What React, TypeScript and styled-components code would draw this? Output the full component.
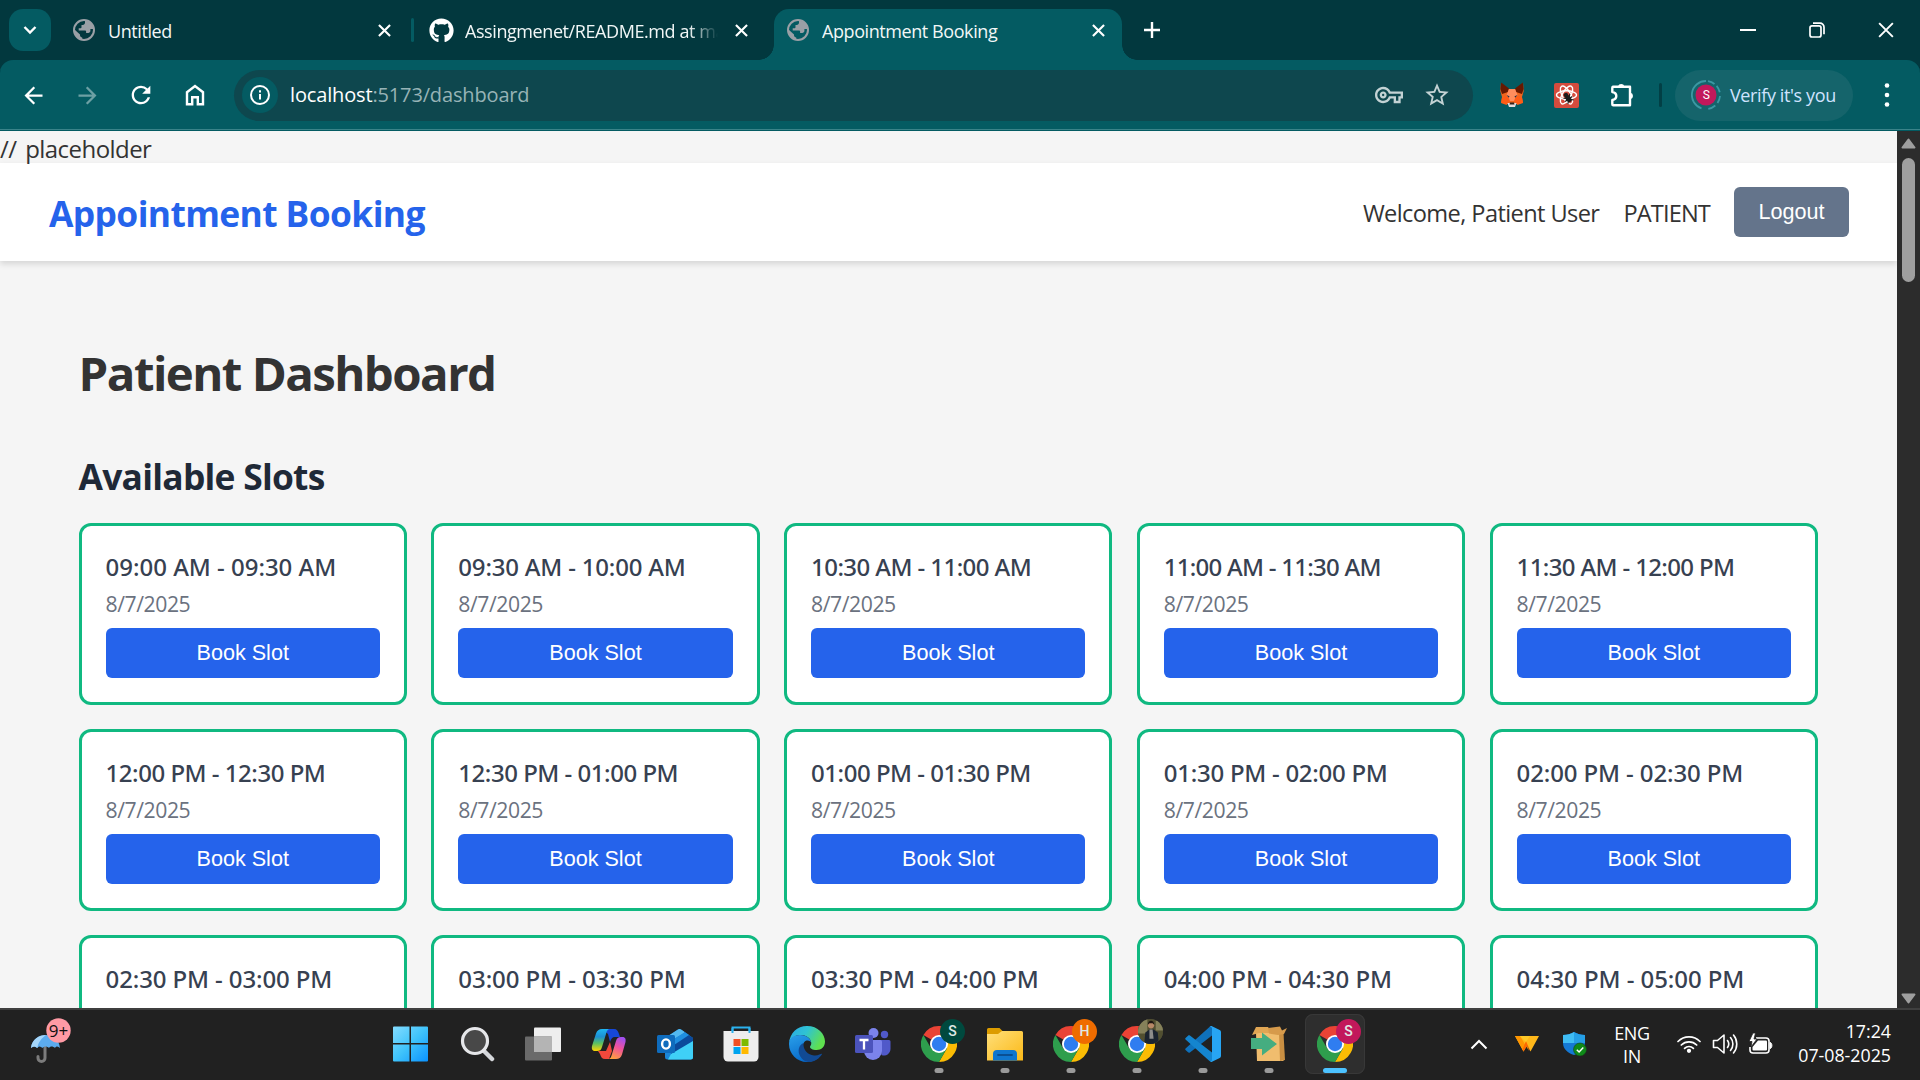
import React from "react";
import styled, { createGlobalStyle, css } from "styled-components";
import { FaGithub } from "react-icons/fa";
import { MdArrowBack, MdArrowForward, MdRefresh, MdOutlineVpnKey, MdStarBorder } from "react-icons/md";

const ui = `"Segoe UI", "Open Sans", "Noto Sans", sans-serif`;
const semi = `"Segoe UI Semibold", "Noto Sans", "Open Sans", sans-serif`;
const arial = `Arial, "Liberation Sans", sans-serif`;

const GlobalStyle = createGlobalStyle`
  * { box-sizing: border-box; }
  body { margin: 0; background: #f5f5f5; overflow: hidden; }
  svg { display: block; flex: none; }
`;

const Screen = styled.div`
  width: 1920px;
  height: 1080px;
  display: flex;
  flex-direction: column;
  overflow: hidden;
  font-family: ${ui};
`;

/* ---------- browser chrome ---------- */

const TabStrip = styled.div`
  height: 60px;
  flex: none;
  display: flex;
  align-items: flex-end;
  padding-left: 9px;
  background: #02383e;
`;

const TabSearch = styled.div`
  width: 42px;
  height: 42px;
  margin: 0 9px 9px 0;
  border-radius: 14px;
  background: #045b62;
  display: grid;
  place-items: center;
`;

const Tabs = styled.div`
  display: flex;
  gap: 9px;
`;

const Tab = styled.div<{ $active?: boolean; $divider?: boolean }>`
  position: relative;
  width: 348px;
  height: 51px;
  padding: 0 0 9px 12px;
  display: flex;
  align-items: center;
  color: #f2f7f7;
  ${(p) =>
    p.$active &&
    css`
      background: #045b62;
      border-radius: 15px 15px 0 0;
      &::before,
      &::after {
        content: "";
        position: absolute;
        bottom: 0;
        width: 15px;
        height: 15px;
      }
      &::before {
        left: -15px;
        background: radial-gradient(circle at 0 0, transparent 14.5px, #045b62 15px);
      }
      &::after {
        right: -15px;
        background: radial-gradient(circle at 100% 0, transparent 14.5px, #045b62 15px);
      }
    `}
  ${(p) =>
    p.$divider &&
    css`
      &::after {
        content: "";
        position: absolute;
        right: -6px;
        top: 9px;
        width: 3px;
        height: 24px;
        border-radius: 2px;
        background: #045b62;
      }
    `}
`;

const TabIcon = styled.div`
  width: 36px;
  display: flex;
`;

const TabTitle = styled.div<{ $fade?: boolean }>`
  width: 253px;
  overflow: hidden;
  white-space: nowrap;
  font-size: 18px;
  line-height: 28px;
  padding-top: 2px;
  letter-spacing: -0.42px;
  ${(p) => p.$fade && css`mask-image: linear-gradient(90deg, #000 224px, transparent 253px);`}
`;

const CloseSlot = styled.div`
  flex: 1;
  display: flex;
  justify-content: center;
`;

const NewTab = styled.div`
  width: 42px;
  height: 42px;
  margin: 0 0 9px 9px;
  display: grid;
  place-items: center;
`;

const WindowControls = styled.div`
  margin-left: auto;
  height: 60px;
  display: flex;
  align-items: center;
`;

const WindowButton = styled.div`
  width: 69px;
  display: flex;
  justify-content: center;
`;

const ToolbarBack = styled.div`
  flex: none;
  height: 71px;
  background: linear-gradient(#02383e 20px, #045b62 20px);
`;

const Toolbar = styled.div`
  height: 71px;
  display: flex;
  align-items: center;
  padding: 0 16px 1px 6px;
  background: #045b62;
  border-radius: 13px 13px 0 0;
  box-shadow: inset 0 -1px #045b62, inset 0 -2px #3a8389;
  color: #fff;
`;

const ToolSlot = styled.div<{ $dim?: boolean; $nudge?: number }>`
  width: 54px;
  display: flex;
  justify-content: center;
  padding-left: ${(p) => p.$nudge ?? 0}px;
  opacity: ${(p) => (p.$dim ? 0.42 : 1)};
`;

const AddressBar = styled.div`
  width: 1239px;
  height: 51px;
  margin: 0 12px;
  padding: 0 22px 0 8px;
  display: flex;
  align-items: center;
  border-radius: 26px;
  background: #0e474e;
  color: #c3d2d4;
`;

const SiteInfo = styled.div`
  width: 36px;
  height: 36px;
  border-radius: 50%;
  background: #045b62;
  display: grid;
  place-items: center;
`;

const Url = styled.div`
  flex: 1;
  margin-left: 12px;
  font-size: 20px;
  letter-spacing: -0.15px;
  line-height: 30px;
  color: #97b3b6;
  b {
    font-weight: 400;
    color: #fff;
  }
`;

const AddressActions = styled.div`
  display: flex;
  align-items: center;
  gap: 20px;
`;

const ToolDivider = styled.div`
  width: 3px;
  height: 24px;
  margin: 0 13px 0 12px;
  border-radius: 2px;
  background: #023f45;
`;

const ProfilePill = styled.div`
  width: 178px;
  height: 51px;
  padding-left: 16px;
  display: flex;
  align-items: center;
  gap: 9px;
  border-radius: 26px;
  background: #15646b;
  color: #cfe3ff;
  font-size: 18px;
  letter-spacing: -0.38px;
  white-space: nowrap;
`;

const MenuSlot = styled.div`
  margin-left: auto;
  width: 34px;
  display: flex;
  justify-content: center;
`;

/* ---------- page ---------- */

const Viewport = styled.div`
  flex: 1;
  min-height: 0;
  display: flex;
`;

const Page = styled.div`
  flex: 1;
  min-width: 0;
  overflow: hidden;
  background: #f5f5f5;
  color: #333;
`;

const Note = styled.div`
  height: 32px;
  font-size: 24px;
  line-height: 35px;
  letter-spacing: -0.55px;
  word-spacing: 3px;
`;

const Header = styled.header`
  height: 98px;
  padding: 0 48px 0 49px;
  display: flex;
  align-items: center;
  justify-content: space-between;
  background: #fff;
  box-shadow: 0 3px 6px rgba(0, 0, 0, 0.13);
`;

const Brand = styled.div`
  font-size: 35.4px;
  font-weight: 700;
  letter-spacing: -0.62px;
  color: #2563eb;
  padding-top: 2px;
`;

const UserNav = styled.div`
  display: flex;
  align-items: center;
  gap: 24px;
  font-size: 23.6px;
`;

const NavText = styled.span<{ $spacing: number }>`
  letter-spacing: ${(p) => p.$spacing}px;
  padding-top: 2px;
`;

const Button = styled.button<{ $variant: "primary" | "muted" }>`
  height: 50px;
  width: ${(p) => (p.$variant === "primary" ? "100%" : "115px")};
  padding: 0;
  border: 0;
  border-radius: 6px;
  background: ${(p) => (p.$variant === "primary" ? "#2563eb" : "#64748b")};
  color: #fff;
  font-family: ${arial};
  font-size: 21.6px;
  line-height: 24px;
`;

const Main = styled.main`
  padding: 82px 79.15px 0 78.6px;
`;

const PageTitle = styled.h1`
  margin: 0 0 50px;
  font-size: 47.4px;
  line-height: 60px;
  letter-spacing: -1.55px;
  color: #333;
`;

const SectionTitle = styled.h2`
  margin: 0 0 24px;
  font-size: 35.4px;
  line-height: 46px;
  letter-spacing: -0.76px;
  color: #1f2937;
`;

const SlotGrid = styled.div`
  display: grid;
  grid-template-columns: repeat(5, 1fr);
  gap: 24px 24.5px;
`;

const SlotCard = styled.div`
  height: 182px;
  padding: 24px;
  border: 3px solid #10b981;
  border-radius: 12px;
  background: #fff;
`;

const SlotTime = styled.div<{ $spacing: number }>`
  font-family: ${semi};
  font-weight: 500;
  font-size: 24px;
  line-height: 34px;
  letter-spacing: ${(p) => p.$spacing}px;
  white-space: nowrap;
  color: #374151;
`;

const SlotDate = styled.div`
  margin: 4px 0 8px;
  font-size: 21.2px;
  line-height: 32px;
  letter-spacing: -0.45px;
  color: #6b7280;
`;

const Scrollbar = styled.div`
  width: 23px;
  background: #2c2c2c;
  display: flex;
  flex-direction: column;
  align-items: center;
  padding: 7px 0 4px;
`;

const Thumb = styled.div`
  width: 13px;
  height: 124px;
  margin: 9px 0 auto;
  border-radius: 7px;
  background: #9f9f9f;
`;

/* ---------- taskbar ---------- */

const Taskbar = styled.div`
  flex: none;
  height: 72px;
  padding-bottom: 2px;
  display: flex;
  align-items: center;
  background: #212121;
  border-top: 2px solid #3f3f3f;
  color: #fff;
`;

const Weather = styled.div`
  width: 381px;
  padding: 0 0 6px 28px;
`;

const AppRow = styled.div`
  display: flex;
  gap: 6px;
  width: 1058px;
`;

const AppTile = styled.div<{ $active?: boolean }>`
  position: relative;
  width: 60px;
  height: 60px;
  border-radius: 8px;
  display: grid;
  place-items: center;
  ${(p) => p.$active && css`background: #2e2e2e; box-shadow: inset 0 0 0 1px #383838;`}
`;

const RunMark = styled.span<{ $active?: boolean }>`
  position: absolute;
  bottom: 1px;
  left: 50%;
  width: ${(p) => (p.$active ? 24 : 9)}px;
  height: 5px;
  border-radius: 3px;
  transform: translateX(-50%);
  background: ${(p) => (p.$active ? "#4cc2ff" : "#9a9a9a")};
`;

const Badge = styled.span<{ $color: string }>`
  position: absolute;
  top: 5px;
  right: 4px;
  width: 25px;
  height: 25px;
  border-radius: 50%;
  overflow: hidden;
  background: ${(p) => p.$color};
  color: #dfe9e6;
  font: 500 14px/25px Roboto, sans-serif;
  text-align: center;
`;

const Tray = styled.div`
  flex: 1;
  height: 100%;
  display: flex;
  align-items: center;
  padding: 0 29px 0 16px;
`;

const TrayIcon = styled.div<{ $w: number }>`
  width: ${(p) => p.$w}px;
  display: flex;
  justify-content: center;
`;

const Language = styled.div`
  width: 66px;
  padding-top: 1px;
  text-align: center;
  font-size: 18px;
  line-height: 23px;
  letter-spacing: -0.4px;
`;

const Clock = styled.div`
  margin-left: auto;
  text-align: right;
  font-size: 17.8px;
  line-height: 24px;
  padding-bottom: 2px;
`;

/* ---------- drawings ---------- */

const Globe = () => (
  <svg width="24" height="24" viewBox="0 0 24 24" fill="#9aa0a6">
    <path d="M12 1a11 11 0 1 0 0 22 11 11 0 0 0 0-22zm0 2a9 9 0 1 1 0 18 9 9 0 0 1 0-18z" />
    <path d="M13 2.500v2.300c0 1.200-1 2.200-2.200 2.200H9.500v2.200c0 .6-.5 1.100-1.100 1.100H6.700V12.500H13c.6 0 1.100.5 1.100 1.100V15h2.100c1.200 0 2.200-.9 2.200-2.200V11h3C21.500 6.500 18 3 13 2.500z" />
    <path d="M2.500 11.500 8 16.500v.8c0 1.200 1 2.200 2.200 2.200v2.200C6 21 2.500 17 2.500 11.500z" />
  </svg>
);

const Cross = ({ size = 13, w = 2.3 }: { size?: number; w?: number }) => (
  <svg width={size} height={size} viewBox="0 0 14 14" stroke="#fff" strokeWidth={w}>
    <path d="M1 1l12 12M13 1L1 13" />
  </svg>
);

const Home = () => (
  <svg width="20" height="22" viewBox="0 0 20 22" fill="none" stroke="#fff" strokeWidth="2.400">
    <path d="M2 8.200 10 2l8 6.200V20.300h-5.200V13.300H7.200v7H2z" />
  </svg>
);

const Fox = () => (
  <svg width="24" height="26" viewBox="0 0 24 26">
    <path d="M1 1l7 6h8l7-6 .7 8-1.700 6 1 5.500L18 22H6l-5-1.500L2 15 .3 9z" fill="#f0651d" />
    <path d="M1.200.5 9 6.500 8 10l-6 2L.4 7zM22.800.5 15 6.500 16 10l6 2 1.600-5z" fill="#661800" />
    <path d="M9 7h6l2.500 6L15 19H9l-2.500-6z" fill="#ff8d5d" />
    <path d="M2 15.500 8 14l2 5-3.500 4-5.500-2zM22 15.500 16 14l-2 5 3.500 4 5.500-2z" fill="#ff5c16" />
    <path d="M6.500 13l3 1.300-.7 1.500zM17.500 13l-3 1.300.7 1.500z" fill="#23344a" />
    <path d="M7.500 21h9L15 25H9z" fill="#e6dcdc" />
    <path d="M10 20.500h4l.5 2h-5z" fill="#32211b" />
  </svg>
);

const ReactBug = () => (
  <svg width="25" height="25" viewBox="0 0 25 25" fill="none">
    <rect width="25" height="25" rx="2" fill="#d54b3d" />
    <g stroke="#fff" strokeWidth="1.400">
      <ellipse cx="12.500" cy="12" rx="10" ry="4.200" />
      <ellipse cx="12.500" cy="12" rx="10" ry="4.200" transform="rotate(60 12.500 12)" />
      <ellipse cx="12.500" cy="12" rx="10" ry="4.200" transform="rotate(120 12.500 12)" />
    </g>
    <g transform="rotate(-35 14 15) translate(2.800 3) scale(.8)" fill="#1c1c1c" stroke="#1c1c1c" strokeWidth="1.300">
      <circle cx="14" cy="10.500" r="2.200" />
      <ellipse cx="14" cy="16" rx="2.600" ry="4" />
      <path d="M9 12l3 2.500M19 12l-3 2.500M8.500 16.500H19.500M9.500 21l3-2.500M18.500 21l-3-2.500" />
    </g>
  </svg>
);

const Puzzle = () => (
  <svg width="26" height="26" viewBox="0 0 26 26">
    <path d="M3 4.800h17v18.400H3.300c-.6 0-1-.4-1-1V18c3-.5 4-2.400 4-4s-1-3.500-4-4V5.800c0-.6.4-1 1-1z" fill="none" stroke="#fff" strokeWidth="2.400" strokeLinejoin="round" />
    <path d="M8 4.500a3.300 3.300 0 0 1 6.400 0zM20.500 10.800a3.300 3.300 0 0 1 0 6.400z" fill="#fff" />
  </svg>
);

const Avatar = () => (
  <svg width="30" height="30" viewBox="0 0 30 30">
    <path d="M15 1a14 14 0 0 0-4.500 27.300" fill="none" stroke="#3b98a3" strokeWidth="1.800" />
    <path d="M17 1.150a14 14 0 0 1 6.500 2.900M25.600 5.800a14 14 0 0 1 3.200 6.500M29 16a14 14 0 0 1-2.500 7M24.300 25.500a14 14 0 0 1-7 3.300" fill="none" stroke="#3b98a3" strokeWidth="1.800" />
    <circle cx="15" cy="15" r="10.500" fill="#c2185b" />
    <text x="15" y="19.200" textAnchor="middle" fontFamily="Roboto, sans-serif" fontSize="12" fill="#fff">S</text>
  </svg>
);

const Windows = () => (
  <svg width="36" height="36" viewBox="0 0 36 36">
    <defs>
      <linearGradient id="win" x1="0" y1="0" x2="1" y2="1">
        <stop offset="0" stopColor="#84dcff" />
        <stop offset=".5" stopColor="#3fc3fb" />
        <stop offset="1" stopColor="#0a92ff" />
      </linearGradient>
    </defs>
    <path d="M1 .5h15.500V17H0V1.500a1 1 0 0 1 1-1zM18 .5h16a1 1 0 0 1 1 1V17H18zM0 18.500h16.500v17H1a1 1 0 0 1-1-1zM18 18.500h17v16a1 1 0 0 1-1 1H18z" fill="url(#win)" />
  </svg>
);

const Search = () => (
  <svg width="36" height="36" viewBox="0 0 36 36">
    <path d="M25 25l8 8" stroke="#d5d7db" strokeWidth="4.500" strokeLinecap="round" />
    <circle cx="16" cy="15" r="12.500" fill="#484848" stroke="#e6e7ea" strokeWidth="3.200" />
  </svg>
);

const TaskView = () => (
  <svg width="36" height="36" viewBox="0 0 36 36">
    <rect x="9" y="1.500" width="27" height="24.500" rx="1" fill="#eeeeee" />
    <rect x="0" y="10.500" width="27" height="24" rx="1" fill="#6a6a6a" />
    <path d="M9 10.500h18V26H9z" fill="#b4b4b4" />
  </svg>
);

const Copilot = () => (
  <svg width="36" height="36" viewBox="0 0 36 36">
    <defs>
      <linearGradient id="cpA" x1="0" y1="0" x2="0" y2="1">
        <stop offset="0" stopColor="#1fb6f2" /><stop offset=".35" stopColor="#1c8fd4" />
        <stop offset=".65" stopColor="#5bbf62" /><stop offset="1" stopColor="#ffd400" />
      </linearGradient>
      <linearGradient id="cpB" x1=".7" y1="0" x2=".3" y2="1">
        <stop offset="0" stopColor="#a04ff0" /><stop offset=".45" stopColor="#f0529a" />
        <stop offset="1" stopColor="#ffa13c" />
      </linearGradient>
    </defs>
    <path d="M11 3h12c3 0 4 2 5 5l1 3h-5c-3 0-4 2-5 5l-2-8z" fill="#1648d8" />
    <path d="M7 25h8l4-9 2 9-3 8h-4c-3 0-4-2-5-5z" fill="#f0483c" />
    <path d="M11 3h8.500c-3 0-3.700 2-4.500 5l-4 13c-1 3-2 4-5 4H4c-3 0-3.500-2.500-3-5L5 7.500C6 4.500 8 3 11 3z" fill="url(#cpA)" />
    <path d="M25 33h-8.500c3 0 3.700-2 4.500-5l4-13c1-3 2-4 5-4h1.500c3 0 3.500 2.500 3 5L31 28.500C30 31.500 28 33 25 33z" fill="url(#cpB)" />
  </svg>
);

const Outlook = () => (
  <svg width="36" height="36" viewBox="0 0 36 36">
    <path d="M8 12 21 3.500a3 3 0 0 1 3 0L36 12v19a2.500 2.500 0 0 1-2.500 2.500h-23A2.500 2.500 0 0 1 8 31z" fill="#1a86d9" />
    <path d="M8 12 21 3.500a3 3 0 0 1 3 0l4 2.700L12 16z" fill="#53b9f0" />
    <path d="M28 6.200 36 12v5L15 29l-3-6z" fill="#0b4a9b" />
    <path d="M28 6.200 32 9 14 21v-6z" fill="#1f8fe0" />
    <path d="M36 15v16a2.500 2.500 0 0 1-2.500 2.500H11L14 28z" fill="#3fd0f7" />
    <rect x="0" y="9" width="18" height="18" rx="1.500" fill="#0f6cbd" />
    <ellipse cx="9" cy="18" rx="3.900" ry="4.600" fill="none" stroke="#fff" strokeWidth="2.400" />
  </svg>
);

const Store = () => (
  <svg width="36" height="36" viewBox="0 0 36 36">
    <path d="M9.500 7V1.500h17V7" fill="none" stroke="#2bb1ee" strokeWidth="2" />
    <path d="M.5 5h35v26a4.500 4.500 0 0 1-4.500 4.500H5A4.500 4.500 0 0 1 .5 31z" fill="#ededed" />
    <path d="M9.500 2v5M26.500 2v5" stroke="#2bb1ee" strokeWidth="2" />
    <path d="M10.500 13h7v7h-7z" fill="#f25022" /><path d="M18.500 13h7v7h-7z" fill="#7fba00" />
    <path d="M10.500 21h7v7h-7z" fill="#00a4ef" /><path d="M18.500 21h7v7h-7z" fill="#ffb900" />
  </svg>
);

const Edge = () => (
  <svg width="36" height="36" viewBox="0 0 36 36">
    <defs>
      <linearGradient id="edG" x1="0" y1="0" x2="1" y2=".4">
        <stop offset="0" stopColor="#2aa7e8" /><stop offset=".5" stopColor="#2fc3d3" /><stop offset="1" stopColor="#5fe04f" />
      </linearGradient>
      <linearGradient id="edB" x1="0" y1="0" x2=".5" y2="1">
        <stop offset="0" stopColor="#2aa0ea" /><stop offset="1" stopColor="#0667c8" />
      </linearGradient>
    </defs>
    <path d="M0 17C1 7 8 0 18 0c11 0 18 8 18 15.500 0 5-3.500 8.500-8.500 8.500-4 0-6.500-1.500-6.500-3 0-1 1.300-1.500 1.300-4C22 12 17 9 11.500 9 6 9 1.500 12.500 0 17z" fill="url(#edG)" />
    <path d="M11 9c7 0 11 4 11.300 8-.3-2-4.300-4-7-1-4 5-1 13 6 15 5 1.300 9-.5 11.500-3C29.500 33 24 36 18 36 8 36 0 28 0 18 0 12 5 9 11 9z" fill="url(#edB)" />
    <path d="M14.500 17c-5 2-6 8-3.500 13 2 4 6 6 9 5.900 6-.2 10.500-3.500 13-8-.5-.7-3.500 2-8 1.500-6-.5-11-5-10.500-12.400z" fill="#114a94" />
  </svg>
);

const Teams = () => (
  <svg width="36" height="36" viewBox="0 0 36 36">
    <circle cx="29.500" cy="8.500" r="3.700" fill="#5059c9" />
    <path d="M25 14h9a1.500 1.500 0 0 1 1.500 1.500V23a6.500 6.500 0 0 1-9 6z" fill="#5059c9" />
    <circle cx="18.500" cy="7" r="5" fill="#7b83eb" />
    <path d="M10 14h15.500a1.500 1.500 0 0 1 1.500 1.500V25a9 9 0 0 1-18 0V15z" fill="#7b83eb" />
    <rect x="0" y="9" width="18" height="18" rx="1.500" fill="#4b53bc" />
    <path d="M4.500 14h9M9 14v9.500" stroke="#fff" strokeWidth="2.300" />
  </svg>
);

const Chrome = () => (
  <svg width="36" height="36" viewBox="0 0 36 36">
    <path d="M18 18 2.410 9A18 18 0 0 1 33.590 9z" fill="#ea4335" />
    <path d="M18 9h15.590A18 18 0 0 1 18 36l7.800-13.500z" fill="#fbbc04" />
    <path d="M10.200 22.500 2.410 9A18 18 0 0 0 18 36l7.800-13.500z" fill="#2e9e4d" />
    <circle cx="18" cy="18" r="9" fill="#fff" />
    <circle cx="18" cy="18" r="7.200" fill="#2f7df0" />
  </svg>
);

const Folder = () => (
  <svg width="36" height="36" viewBox="0 0 36 36">
    <defs>
      <linearGradient id="fold" x1="0" y1="0" x2="1" y2="1">
        <stop offset="0" stopColor="#ffdf7a" /><stop offset="1" stopColor="#fbb917" />
      </linearGradient>
    </defs>
    <path d="M0 3.500A1.500 1.500 0 0 1 1.500 2h11L16 5.500V10H0z" fill="#dc9c00" />
    <path d="M0 8h11l4-3h19.500A1.500 1.500 0 0 1 36 6.500V34.500H0z" fill="url(#fold)" />
    <path d="M6 34.500V28a4 4 0 0 1 4-4h16a4 4 0 0 1 4 4v6.500z" fill="#0f76cf" />
    <path d="M11 29h14" stroke="#0a4f93" strokeWidth="1.800" strokeLinecap="round" />
  </svg>
);

const VsCode = () => (
  <svg width="36" height="36" viewBox="0 0 36 36">
    <path d="M.8 22.300a1.300 1.300 0 0 0 0 2l2.200 2c.6.500 1.300.5 1.900.1L27 9.500V.8c-1-.5-2-.3-2.800.5z" fill="#0f71bb" />
    <path d="M.8 13.700a1.300 1.300 0 0 1 0-2l2.200-2c.6-.5 1.300-.5 1.900-.1L27 26.500v8.700c-1 .5-2 .3-2.800-.5z" fill="#1485cf" />
    <path d="M27 .3 34.700 4A2.500 2.500 0 0 1 36 6.300v23.400a2.500 2.500 0 0 1-1.300 2.300L27 35.700c-1 .4-2 .1-2.700-.6 1.200.7 2.700 0 2.700-1.600v-31C27 .9 25.500.2 24.300.9 25 .2 26-.1 27 .3z" fill="#27a5f3" />
  </svg>
);

const PackageBox = () => (
  <svg width="36" height="36" viewBox="0 0 36 36">
    <path d="M5 7h26l1.500 28H6z" fill="#f0bd6e" />
    <path d="M28 7h4.500l1.500 27-5 1z" fill="#c98f42" />
    <path d="M5 1h12l4 6H8L1 9z" fill="#e0a654" />
    <path d="M17 2l12-1.500 2 4L36 2l-3 6-6 1-9-1.500z" fill="#d69a4b" />
    <path d="M0 12h11V6.500L26 18 11 29.500V23H0z" fill="#45ad80" />
  </svg>
);

const Portrait = () => (
  <svg width="25" height="25" viewBox="0 0 24 24">
    <rect width="24" height="24" fill="#514f30" />
    <path d="M0 0h9v14H0zM17 2h7v9h-7z" fill="#85815a" />
    <path d="M6 24l1-11 4-3h4l4 3 1 11z" fill="#1b2430" />
    <path d="M11 10h3l1 9h-4z" fill="#8d8d8b" />
    <circle cx="12.500" cy="6" r="3" fill="#b78967" />
    <path d="M9.500 5.500c0-5 6-5 6 0l-1.500-1.500h-3z" fill="#1d1611" />
  </svg>
);

const Umbrella = () => (
  <svg width="44" height="46" viewBox="0 0 44 46">
    <path d="M17 24v16a3.500 3.500 0 0 1-7 0v-1.500" fill="none" stroke="#7c7c7c" strokeWidth="3" strokeLinecap="round" />
    <path d="M3 30C4 21 11 17 18 17s13 4 14 13c-2-2-4-2-5 0-2-2-5-2-6 0-2-2-5-2-6.500 0-2-2-4-2-5.500 0-2-2-4-2-6 0z" fill="#5cabee" />
    <path d="M3 30C4 21 11 17 18 17c-4 3-8 7-8.500 13-2-2-4.500-2-6.500 0z" fill="#a5d6fa" />
    <circle cx="30.500" cy="12.500" r="12.200" fill="#ff9aa5" />
    <text x="30.500" y="18.500" textAnchor="middle" fontFamily="Open Sans, Noto Sans, sans-serif" fontSize="17" fill="#111">9+</text>
  </svg>
);

const Wallet = () => (
  <svg width="24" height="18" viewBox="0 0 24 18">
    <path d="M0 1h24L15.500 16.500 12 10l-3.500 6.500z" fill="#ffb81a" />
    <path d="M0 1h5l9 15-2-6-3.500 6.500z" fill="#ff9500" />
    <path d="M7.500 14.500 11 6l4.500 10.500L12 11l-3.500 5.500z" fill="#ff6a00" />
    <path d="M5 1h10l-4 6z" fill="#ffc928" />
  </svg>
);

const Shield = () => (
  <svg width="24" height="24" viewBox="0 0 24 24">
    <path d="M11 0c3 2 7 3 11 3v8c0 6-5 10-11 12C5 21 0 17 0 11V3c4 0 8-1 11-3z" fill="#1579d4" />
    <path d="M11 0v11H0V3c4 0 8-1 11-3z" fill="#3fbcf3" />
    <path d="M11 0c3 2 7 3 11 3v8H11z" fill="#259fe6" />
    <circle cx="17" cy="17.500" r="6.500" fill="#0f8a18" stroke="#17431b" strokeWidth=".6" />
    <path d="M13.800 17.700l2.300 2.300 4.200-4.400" fill="none" stroke="#fff" strokeWidth="1.500" />
  </svg>
);

const Wifi = () => (
  <svg width="24" height="18" viewBox="0 0 24 18" fill="none" stroke="#fff" strokeWidth="1.700" strokeLinecap="round">
    <path d="M1 6.500a15.500 15.500 0 0 1 22 0M4.300 10a11 11 0 0 1 15.400 0M7.600 13.300a6.300 6.300 0 0 1 8.800 0" />
    <circle cx="12" cy="15.800" r="1.300" fill="#fff" />
  </svg>
);

const Speaker = () => (
  <svg width="26" height="22" viewBox="0 0 26 22" fill="none" stroke="#fff" strokeWidth="1.600" strokeLinecap="round" strokeLinejoin="round">
    <path d="M1.500 7.500h4L12 2v18l-6.500-5.500h-4z" />
    <path d="M15.500 7.500a6 6 0 0 1 0 7M18.500 4.500a10 10 0 0 1 0 13M21.500 2a14 14 0 0 1 0 18" />
  </svg>
);

const Battery = () => (
  <svg width="26" height="22" viewBox="0 0 26 22">
    <path d="M8 5h10a3 3 0 0 1 3 3v9a3 3 0 0 1-3 3H5a3 3 0 0 1-3-3v-3" fill="none" stroke="#fff" strokeWidth="1.600" />
    <path d="M10 7.500h8a1 1 0 0 1 1 1v8a1 1 0 0 1-1 1H5.500a1 1 0 0 1-1-1V14z" fill="#fff" />
    <path d="M22 9.500c2.500 0 2.500 6 0 6z" fill="#fff" stroke="#fff" />
    <path d="M5 0 1 8.500h3L3 14l6-8H6L7.500 0z" fill="#fff" stroke="#212121" strokeWidth=".8" />
  </svg>
);

/* ---------- data ---------- */

const slots: { time: string; spacing: number }[] = [
  { time: "09:00 AM - 09:30 AM", spacing: -0.02 },
  { time: "09:30 AM - 10:00 AM", spacing: -0.2 },
  { time: "10:30 AM - 11:00 AM", spacing: -0.58 },
  { time: "11:00 AM - 11:30 AM", spacing: -0.74 },
  { time: "11:30 AM - 12:00 PM", spacing: -0.64 },
  { time: "12:00 PM - 12:30 PM", spacing: -0.48 },
  { time: "12:30 PM - 01:00 PM", spacing: -0.48 },
  { time: "01:00 PM - 01:30 PM", spacing: -0.48 },
  { time: "01:30 PM - 02:00 PM", spacing: -0.27 },
  { time: "02:00 PM - 02:30 PM", spacing: -0.12 },
  { time: "02:30 PM - 03:00 PM", spacing: -0.12 },
  { time: "03:00 PM - 03:30 PM", spacing: -0.08 },
  { time: "03:30 PM - 04:00 PM", spacing: -0.06 },
  { time: "04:00 PM - 04:30 PM", spacing: -0.04 },
  { time: "04:30 PM - 05:00 PM", spacing: -0.06 },
];

type TaskbarApp = { icon: React.ReactNode; running?: boolean; active?: boolean; badge?: React.ReactNode; badgeColor?: string };

const apps: TaskbarApp[] = [
  { icon: <Windows /> },
  { icon: <Search /> },
  { icon: <TaskView /> },
  { icon: <Copilot /> },
  { icon: <Outlook /> },
  { icon: <Store /> },
  { icon: <Edge /> },
  { icon: <Teams /> },
  { icon: <Chrome />, running: true, badge: "S", badgeColor: "#00493e" },
  { icon: <Folder />, running: true },
  { icon: <Chrome />, running: true, badge: "H", badgeColor: "#ef6c00" },
  { icon: <Chrome />, running: true, badge: <Portrait />, badgeColor: "#444" },
  { icon: <VsCode />, running: true },
  { icon: <PackageBox />, running: true },
  { icon: <Chrome />, running: true, active: true, badge: "S", badgeColor: "#c2185b" },
];

export default function App() {
  return (
    <Screen>
      <GlobalStyle />
      <TabStrip>
        <TabSearch>
          <svg width="14" height="10" viewBox="0 0 14 10" fill="none" stroke="#fff" strokeWidth="2.400">
            <path d="M1.500 2 7 7.500 12.500 2" />
          </svg>
        </TabSearch>
        <Tabs>
          <Tab $divider>
            <TabIcon><Globe /></TabIcon>
            <TabTitle>Untitled</TabTitle>
            <CloseSlot><Cross /></CloseSlot>
          </Tab>
          <Tab>
            <TabIcon><FaGithub size={25} color="#fff" /></TabIcon>
            <TabTitle $fade>Assingmenet/README.md at main</TabTitle>
            <CloseSlot><Cross /></CloseSlot>
          </Tab>
          <Tab $active>
            <TabIcon><Globe /></TabIcon>
            <TabTitle>Appointment Booking</TabTitle>
            <CloseSlot><Cross /></CloseSlot>
          </Tab>
        </Tabs>
        <NewTab>
          <svg width="16" height="16" viewBox="0 0 16 16" stroke="#fff" strokeWidth="2.400"><path d="M8 0v16M0 8h16" /></svg>
        </NewTab>
        <WindowControls>
          <WindowButton>
            <svg width="16" height="2" viewBox="0 0 16 2"><path d="M0 0h16v2H0z" fill="#fff" /></svg>
          </WindowButton>
          <WindowButton>
            <svg width="16" height="16" viewBox="0 0 16 16" fill="none" stroke="#fff" strokeWidth="1.700">
              <rect x="1" y="3.800" width="11" height="11.200" rx="2" />
              <path d="M4 1.200h7a4 4 0 0 1 4 4v7" />
            </svg>
          </WindowButton>
          <WindowButton><Cross size={16} w={1.7} /></WindowButton>
        </WindowControls>
      </TabStrip>
      <ToolbarBack>
        <Toolbar>
          <ToolSlot><MdArrowBack size={27} /></ToolSlot>
          <ToolSlot $dim><MdArrowForward size={27} /></ToolSlot>
          <ToolSlot><MdRefresh size={28} /></ToolSlot>
          <ToolSlot><Home /></ToolSlot>
          <AddressBar>
            <SiteInfo>
              <svg width="20" height="20" viewBox="0 0 20 20" fill="none" stroke="#fff" strokeWidth="2">
                <circle cx="10" cy="10" r="9" />
                <path d="M10 9v5.500M10 5.200v2.200" />
              </svg>
            </SiteInfo>
            <Url><b>localhost</b>:5173/dashboard</Url>
            <AddressActions>
              <MdOutlineVpnKey size={28} />
              <MdStarBorder size={28} />
            </AddressActions>
          </AddressBar>
          <ToolSlot><Fox /></ToolSlot>
          <ToolSlot><ReactBug /></ToolSlot>
          <ToolSlot $nudge={5}><Puzzle /></ToolSlot>
          <ToolDivider />
          <ProfilePill><Avatar />Verify it's you</ProfilePill>
          <MenuSlot>
            <svg width="6" height="24" viewBox="0 0 6 24" fill="#fff">
              <circle cx="3" cy="2.500" r="2.300" /><circle cx="3" cy="12" r="2.300" /><circle cx="3" cy="21.500" r="2.300" />
            </svg>
          </MenuSlot>
        </Toolbar>
      </ToolbarBack>

      <Viewport>
        <Page>
          <Note>// placeholder</Note>
          <Header>
            <Brand>Appointment Booking</Brand>
            <UserNav>
              <NavText $spacing={-0.6}>Welcome, Patient User</NavText>
              <NavText $spacing={-0.85}>PATIENT</NavText>
              <Button $variant="muted">Logout</Button>
            </UserNav>
          </Header>
          <Main>
            <PageTitle>Patient Dashboard</PageTitle>
            <SectionTitle>Available Slots</SectionTitle>
            <SlotGrid>
              {slots.map((s) => (
                <SlotCard key={s.time}>
                  <SlotTime $spacing={s.spacing}>{s.time}</SlotTime>
                  <SlotDate>8/7/2025</SlotDate>
                  <Button $variant="primary">Book Slot</Button>
                </SlotCard>
              ))}
            </SlotGrid>
          </Main>
        </Page>
        <Scrollbar>
          <svg width="15" height="11" viewBox="0 0 15 11"><path d="M7.500 1.500 13.500 9.500h-12z" fill="#9f9f9f" stroke="#9f9f9f" strokeWidth="2" strokeLinejoin="round" /></svg>
          <Thumb />
          <svg width="15" height="11" viewBox="0 0 15 11"><path d="M7.500 9.500 13.500 1.500h-12z" fill="#9f9f9f" stroke="#9f9f9f" strokeWidth="2" strokeLinejoin="round" /></svg>
        </Scrollbar>
      </Viewport>

      <Taskbar>
        <Weather><Umbrella /></Weather>
        <AppRow>
          {apps.map((a, i) => (
            <AppTile key={i} $active={a.active}>
              {a.icon}
              {a.badge && <Badge $color={a.badgeColor!}>{a.badge}</Badge>}
              {a.running && <RunMark $active={a.active} />}
            </AppTile>
          ))}
        </AppRow>
        <Tray>
          <TrayIcon $w={48}>
            <svg width="18" height="11" viewBox="0 0 18 11" fill="none" stroke="#fff" strokeWidth="2"><path d="M1.500 9.500 9 2l7.500 7.500" /></svg>
          </TrayIcon>
          <TrayIcon $w={48}><Wallet /></TrayIcon>
          <TrayIcon $w={48}><Shield /></TrayIcon>
          <Language>ENG<br />IN</Language>
          <TrayIcon $w={48}><Wifi /></TrayIcon>
          <TrayIcon $w={24}><Speaker /></TrayIcon>
          <TrayIcon $w={48}><Battery /></TrayIcon>
          <Clock>17:24<br />07-08-2025</Clock>
        </Tray>
      </Taskbar>
    </Screen>
  );
}
